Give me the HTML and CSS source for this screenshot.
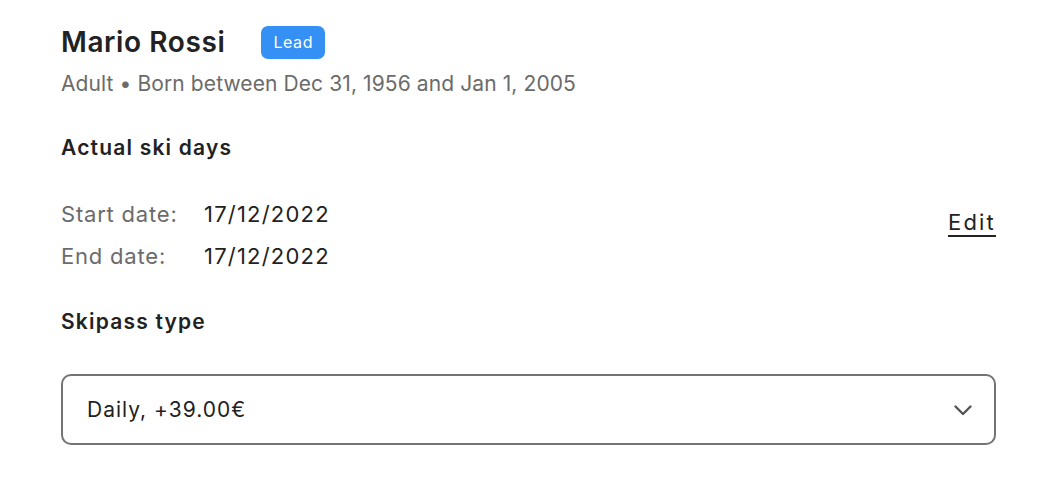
FILE: index.html
```html
<!DOCTYPE html>
<html lang="en">

<head>
    <meta charset="UTF-8">
    <meta name="viewport" content="width=device-width, initial-scale=1.0">
    <title>Skier details</title>
    <link rel="stylesheet" href="styles.css">
</head>

<body>
    <div class="container">
        <div class="skier-header">
            <h1>Mario Rossi</h1>
            <span class="badge">Lead</span>
        </div>
        <p class="subtitle">Adult • Born between Dec 31, 1956 and Jan 1, 2005</p>

        <h2>Actual ski days</h2>
        <div class="days">
            <div class="dates">
                <div class="date-row">
                    <span class="date-label">Start date:</span>
                    <span class="date-value">17/12/2022</span>
                </div>
                <div class="date-row">
                    <span class="date-label">End date:</span>
                    <span class="date-value">17/12/2022</span>
                </div>
            </div>
            <a href="#" class="edit-link">Edit</a>
        </div>

        <h2 class="skipass-title">Skipass type</h2>
        <div class="select">
            <span>Daily, +39.00€</span>
            <svg width="20" height="20" viewBox="0 0 20 20" fill="none">
                <path d="M2.5 6.5l7.5 7.5 7.5-7.5" stroke="#555" stroke-width="2.4" stroke-linecap="round" stroke-linejoin="round" />
            </svg>
        </div>
    </div>
</body>

</html>
```

FILE: styles.css
```css
body {
    font-family: Inter, "Open Sans", sans-serif;
    background-color: #fff;
    color: #222;
    margin: 0;
}

.container {
    width: 935px;
    padding: 25px 0 0 61px;
}

.skier-header {
    display: flex;
    align-items: center;
    gap: 36px;
}

h1 {
    font-size: 28px;
    font-weight: 600;
    letter-spacing: 0.6px;
    margin: 0;
    line-height: 34px;
}

.badge {
    background: #3590f5;
    color: #fff;
    font-size: 16px;
    letter-spacing: 0.6px;
    padding: 7px 12px;
    border-radius: 7px;
    line-height: 19px;
}

.subtitle {
    color: #6b6b6b;
    font-size: 21px;
    letter-spacing: 0.1px;
    margin: 12px 0 0;
    line-height: 26px;
}

h2 {
    font-size: 21px;
    font-weight: 600;
    letter-spacing: 1.2px;
    margin: 38px 0 0;
    line-height: 26px;
}

.days {
    display: flex;
    justify-content: space-between;
    align-items: flex-start;
    margin-top: 40px;
}

.date-row {
    display: flex;
    font-size: 22px;
    letter-spacing: 0.8px;
    line-height: 26px;
    margin-bottom: 16px;
}

.date-row:last-child {
    margin-bottom: 0;
}

.date-label {
    color: #6b6b6b;
    width: 143px;
}

.date-value {
    letter-spacing: 1.2px;
}

.edit-link {
    color: #222;
    font-size: 22px;
    letter-spacing: 2.2px;
    line-height: 26px;
    margin-top: 8px;
    text-underline-offset: 5px;
}

.skipass-title {
    margin-top: 40px;
}

.select {
    margin-top: 39px;
    height: 71px;
    box-sizing: border-box;
    border: 2px solid #737373;
    border-radius: 10px;
    display: flex;
    align-items: center;
    justify-content: space-between;
    padding: 0 21px 0 24px;
    font-size: 21px;
    letter-spacing: 1px;
}
```
